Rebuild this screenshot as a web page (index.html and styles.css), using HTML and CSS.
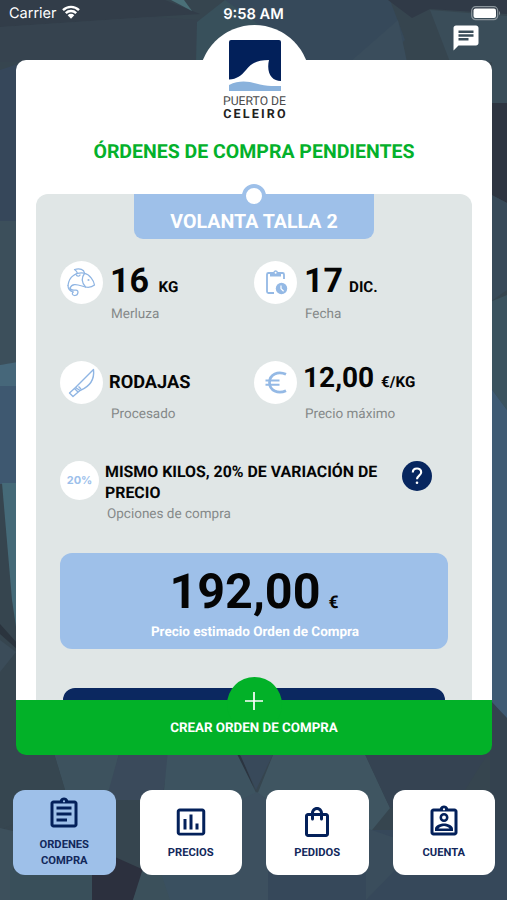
FILE: index.html
```html
<!DOCTYPE html>
<html lang="es">
<head>
<meta charset="utf-8">
<title>Puerto de Celeiro</title>
<link rel="stylesheet" href="styles.css">
</head>
<body>
<svg class="backdrop" viewBox="0 0 507 900" preserveAspectRatio="none" aria-hidden="true">
  <rect width="507" height="900" fill="#36454f"/>
  <path fill="#323d49" d="M0 0H165L200 14 150 17 0 27z"/>
  <path fill="#36434f" d="M0 27L150 17 200 20 205 62H0z"/>
  <path fill="#4a7078" d="M171 0L192 11 184 0z"/>
  <path fill="#38505b" d="M197 22L225 0H330L310 62H196z"/>
  <path fill="#36495a" d="M225 0H390L405 40 380 62H310z"/>
  <path fill="#3a4d5c" d="M350 62L398 20 407 62z"/>
  <path fill="#303a47" d="M388 0H507V14L430 9 412 18z"/>
  <path fill="#3a4d59" d="M430 10L507 16V103H492V62H450z"/>
  <path fill="#36475a" d="M0 70L18 64V221H0z"/>
  <path fill="#3c4f5b" d="M0 221H18V363L0 365z"/>
  <path fill="#46677a" d="M0 365L18 362V387H0z"/>
  <path fill="#3e5870" d="M0 386H18V484H0z"/>
  <path fill="#456a78" d="M2 483L18 483V640L12 600z"/>
  <path fill="#2b343e" d="M0 624L18 644V650L0 634z"/>
  <path fill="#3b4c59" d="M0 640L16 652 0 672z"/>
  <path fill="#2e3541" d="M490 103H507V203L490 194z"/>
  <path fill="#384a59" d="M490 194L507 203V290L490 302z"/>
  <path fill="#3b535f" d="M490 302L507 295V410L490 387z"/>
  <path fill="#3f5b74" d="M490 387L507 410V720L490 700z"/>
  <path fill="#34424f" d="M490 700L507 718V900H490z"/>
  <path fill="#3d525e" d="M53 750H120L108 800H68z"/>
  <path fill="#3a4a5b" d="M120 750H170L162 800H106z"/>
  <path fill="#3d5360" d="M168 750H236L257 795 240 830H160z"/>
  <path fill="#2b3440" d="M235 750L242 757 254 788z"/>
  <path fill="#38495a" d="M238 750H275L256 790z"/>
  <path fill="#3f5561" d="M275 750H363L390 808 368 835 257 795z"/>
  <path fill="#354352" d="M363 750H490L465 790 390 808z"/>
  <path fill="#364650" d="M0 750H53L68 800 0 830z"/>
  <path fill="#3d505c" d="M0 828L13 831V900H0z"/>
  <path fill="#394f5a" d="M10 870H92V900H10z"/>
  <path fill="#2c303e" d="M92 900V870L115 857 144 870 133 900z"/>
  <path fill="#3b505b" d="M133 900L144 865 166 868 175 900z"/>
  <path fill="#3a5060" d="M160 870H267V900H170z"/>
  <path fill="#36485a" d="M267 830H507V900H267z"/>
  <path fill="#3d505f" d="M240 800L257 792 268 800V900H240z"/>
  <path fill="#3a4d5c" d="M366 828L395 838V870L366 900z"/>
</svg>

<div class="screen">
  <header class="status">
    <div class="carrier"><span>Carrier</span>
      <svg class="wifi" viewBox="0 0 18 14"><g fill="none" stroke="#fff" stroke-width="2.400"><path d="M1 5.200a11.400 11.400 0 0 1 16 0"/><path d="M3.800 8.200a7.400 7.400 0 0 1 10.400 0"/></g><path d="M5.700 10.200a4.700 4.700 0 0 1 6.600 0L9 13.700z" fill="#fff"/></svg>
    </div>
    <time>9:58 AM</time>
    <svg class="battery" viewBox="0 0 31 15"><rect x=".7" y=".7" width="26" height="13" rx="4" fill="none" stroke="#8b959c" stroke-width="1.2"/><rect x="2.5" y="2.5" width="22.5" height="9.5" rx="2" fill="#fff"/><path d="M28 5q2.2 2.2 0 4.5z" fill="#8b959c"/></svg>
  </header>
  <svg class="chat" viewBox="0 0 24 24" fill="#fff"><path d="M20 2H4c-1.1 0-1.99.9-1.99 2L2 22l4-4h14c1.1 0 2-.9 2-2V4c0-1.1-.9-2-2-2zM6 9h12v2H6V9zm8 5H6v-2h8v2zm4-6H6V6h12v2z"/></svg>

  <main class="card">
    <div class="brand">
      <svg class="mark" viewBox="0 0 52 51"><path fill="#02205a" d="M2 0H50Q52 0 52 2V41C43 41 37 33 40 20C27 20 22 24 17 30C12 36 8 39 0 39.500V2Q0 0 2 0z"/><path fill="#8ab2dc" d="M0 45C12 39 22 42 31 44.500C39 46.500 46 46 52 46V51H0z"/></svg>
      <span class="brand-top">PUERTO DE</span>
      <span class="brand-name">CELEIRO</span>
    </div>
    <h1>ÓRDENES DE COMPRA PENDIENTES</h1>

    <section class="order">
      <div class="tab"><i class="ring"></i><h2>VOLANTA TALLA 2</h2></div>
      <div class="facts">
        <div class="fact">
          <div class="disc"><svg viewBox="0 0 43 43" fill="none" stroke="#8fb5e3" stroke-width="1.25" stroke-linejoin="round" stroke-linecap="round"><path d="M8 24.500C9 15 17 11 24 12.200C30 13.500 34 20 34.500 24C31 27 26 26.500 22 25C16 23 12 22.500 10 27"/><path d="M15 13.500C18 13 18 11 14.500 8.500C20 7 24 8.500 24.500 12"/><path d="M24.500 12.500C21 17 22 22 25.500 26"/><path d="M8 24.500C8 29 11 30.500 13.500 31C11.500 32 12 34.500 15 34.500C18.500 34 19 29 16 29C13 29.500 10.500 29 10 27"/><path d="M16.500 14.500Q18.500 16 20 14"/><circle cx="28.500" cy="19" r=".4"/></svg></div>
          <p class="value big">16 <small class="kg">KG</small></p>
          <p class="label">Merluza</p>
        </div>
        <div class="fact">
          <div class="disc"><svg viewBox="0 0 43 43"><path fill="none" stroke="#94b9e5" stroke-width="1.8" d="M20 32H14.500Q13 32 13 30.500V13.500Q13 12 14.500 12H28.500Q30 12 30 13.500V18"/><path fill="#94b9e5" d="M16 11h3.300a2.500 2.500 0 0 1 4.700 0H27v4.500H16z"/><circle cx="21.600" cy="11.700" r="1" fill="#fff"/><circle cx="27.500" cy="27.500" r="5.700" fill="#94b9e5"/><path d="M27 24.500V27.700L29.600 30.200" fill="none" stroke="#fff" stroke-width="1.200"/></svg></div>
          <p class="value big">17<small class="dic">DIC.</small></p>
          <p class="label">Fecha</p>
        </div>
        <div class="fact">
          <div class="disc"><svg viewBox="0 0 43 43" fill="none" stroke="#8fb5e3" stroke-width="1.400" stroke-linejoin="round"><path d="M15.500 26.500L33.500 8.500C34.500 17 31 25 20 29.500L15.500 26.500L9.500 32L13 35.500L20 29.500"/><path d="M14.500 27.500L18 31M18.500 25.500L21 28"/></svg></div>
          <p class="value word">RODAJAS</p>
          <p class="label">Procesado</p>
        </div>
        <div class="fact">
          <div class="disc"><svg viewBox="0 0 43 43" fill="none" stroke="#94b9e5" stroke-width="2.700"><path d="M32 13.300C24 9.500 15.500 13.500 15.500 21.500S24 33.500 32 29.700"/><path d="M11.500 19.500H25.500M11.500 23.800H25.500" stroke-width="1.900"/></svg></div>
          <p class="value price">12,00 <small>€/KG</small></p>
          <p class="label">Precio máximo</p>
        </div>
      </div>
      <div class="option">
        <div class="disc percent">20%</div>
        <div class="option-text"><p>MISMO KILOS, 20% DE VARIACIÓN DE PRECIO</p><p class="label">Opciones de compra</p></div>
        <div class="help"><svg viewBox="0 0 30 30"><path d="M10.800 11.500C10.800 6.200 19.200 6.200 19.200 11.300C19.200 14.500 15 14.700 15 18.200" fill="none" stroke="#fff" stroke-width="2.100"/><circle cx="15" cy="21.800" r="1.300" fill="#fff"/></svg></div>
      </div>
      <div class="total"><p class="amount"><span>192,00</span><small>€</small></p><p class="caption">Precio estimado Orden de Compra</p></div>
      <div class="next"></div>
    </section>
  </main>

  <div class="create">
    <span class="plus"></span>
    <svg class="cross" viewBox="0 0 18 18"><path d="M9 0V18M0 9H18" stroke="#fff" stroke-width="1.700"/></svg>
    <span class="create-text">CREAR ORDEN DE COMPRA</span>
  </div>

  <nav>
    <a class="active"><svg viewBox="0 0 24 24"><path d="M7 15h7v2H7zm0-4h10v2H7zm0-4h10v2H7zm12-4h-4.180C14.400 1.840 13.300 1 12 1s-2.400.840-2.820 2H5c-1.100 0-2 .9-2 2v14c0 1.100.9 2 2 2h14c1.100 0 2-.9 2-2V5c0-1.100-.9-2-2-2zm-7-.250a.75.75 0 0 1 0 1.500.75.75 0 0 1 0-1.500zM19 19H5V5h14v14z"/></svg><span>ORDENES<br>COMPRA</span></a>
    <a><svg viewBox="0 0 24 24"><path d="M7 10h2v7H7zm4-3h2v10h-2zm4 6h2v4h-2zm4.500 6.100h-15V5h15v14.100zm0-16.100h-15c-1.100 0-2 .9-2 2v14c0 1.100.9 2 2 2h15c1.100 0 2-.9 2-2V5c0-1.100-.9-2-2-2z"/></svg><span>PRECIOS</span></a>
    <a><svg viewBox="0 0 24 24"><path d="M18 6h-2c0-2.210-1.790-4-4-4S8 3.790 8 6H6c-1.100 0-2 .9-2 2v12c0 1.100.9 2 2 2h12c1.100 0 2-.9 2-2V8c0-1.100-.9-2-2-2zm-6-2c1.100 0 2 .9 2 2h-4c0-1.100.9-2 2-2zm6 16H6V8h2v2c0 .550.450 1 1 1s1-.450 1-1V8h4v2c0 .550.450 1 1 1s1-.450 1-1V8h2v12z"/></svg><span>PEDIDOS</span></a>
    <a><svg viewBox="0 0 24 24"><path fill-rule="evenodd" d="M19 3h-4.180C14.400 1.840 13.300 1 12 1s-2.400.840-2.820 2H5c-1.100 0-2 .9-2 2v14c0 1.100.9 2 2 2h14c1.100 0 2-.9 2-2V5c0-1.100-.9-2-2-2zM12 2.750a.75.75 0 0 1 0 1.500.75.75 0 0 1 0-1.500zM19 19H5V5h14zM12 6a3 3 0 1 0 0 6 3 3 0 0 0 0-6zm0 1.700a1.300 1.300 0 1 1 0 2.600 1.300 1.300 0 0 1 0-2.600zM6 16.500V18h12v-1.500c0-2.500-3.970-3.580-6-3.580s-6 1.080-6 3.580zm2.300-.1c.7-.970 2.600-1.700 3.700-1.700s3.010.730 3.700 1.700z"/></svg><span>CUENTA</span></a>
  </nav>
</div>
</body>
</html>
```
FILE: styles.css
```css
* { box-sizing: border-box; margin: 0; padding: 0; }
body { width: 507px; height: 900px; overflow: hidden; font-family: Roboto, sans-serif; color: #050505; text-rendering: geometricPrecision; }
svg { display: block; }
.backdrop { position: absolute; left: 0; top: 0; width: 507px; height: 900px; }
.screen { position: relative; height: 900px; display: flex; flex-direction: column; }

.status { display: grid; grid-template-columns: 1fr 64px 1fr; height: 60px; padding: 6px 5px 0 5px; color: #fff; font: 500 14.700px/16px Inter, sans-serif; }
.status time { font-weight: 600; white-space: nowrap; text-align: center; }
.carrier { display: flex; gap: 5px; padding-left: 4px; font-weight: 400; font-size: 14.500px; }
.wifi { width: 18px; height: 14px; margin-top: -1px; }
.battery { width: 31px; height: 15px; justify-self: end; }
.chat { position: absolute; left: 450.500px; top: 22.500px; width: 30px; height: 30px; }

.card { display: flow-root; position: relative; margin: 0 15px 0 16px; height: 640px; border-radius: 10px 10px 0 0; background: #fff; }
.card::before { content: ""; position: absolute; left: 182.500px; top: -35px; width: 111px; height: 111px; border-radius: 50%; background: #fff; }
.brand { position: relative; display: flex; flex-direction: column; align-items: center; height: 82px; margin-top: -20px; }
.mark { width: 52px; height: 51px; flex: none; margin-left: 2px; }
.brand-top { margin: 3px 0 0 1px; font-size: 12.200px; line-height: 14px; color: #4b4b4b; }
.brand-name { font-size: 12.500px; line-height: 13px; font-weight: 700; letter-spacing: 2.200px; margin-left: 3px; color: #222; }
h1 { position: relative; margin-top: 18px; text-align: center; font-size: 19.500px; line-height: 24px; font-weight: 700; color: #04b12b; white-space: nowrap; }

.order { margin: 30px 20px 0; height: 506px; border-radius: 12px 12px 0 0; background: #e0e6e6; padding: 0 24px; }
.tab { position: relative; width: 240px; height: 45px; margin: 0 auto; background: #9ec0e9; border-radius: 0 0 9px 9px; padding-top: 16px; }
.ring { position: absolute; left: 108px; top: -10px; width: 24px; height: 24px; border-radius: 50%; border: 4px solid #9ec0e9; background: #fff; }
h2 { color: #fff; font-size: 19.600px; line-height: 24px; font-weight: 700; text-align: center; }
.facts { display: grid; grid-template-columns: 194px 194px; grid-template-rows: 100px 100px; padding-top: 22px; }
.fact { display: grid; grid-template-columns: 43px 1fr; grid-template-rows: 43px 20px; column-gap: 6px; }
.disc { width: 43px; height: 43px; border-radius: 50%; background: #fff; }
.value { font-weight: 700; white-space: nowrap; }
.big { font-size: 34px; line-height: 40px; padding-left: 1px; }
.value small { font-size: 15.200px; line-height: 1; }
.kg { margin-left: 1px; }
.value .dic { margin-left: 6px; }
.label { color: #858989; font-size: 13.500px; line-height: 20px; white-space: nowrap; }
.fact .label { grid-column: 2; padding-left: 2px; }
.word { font-size: 18.200px; line-height: 44px; }
.price { font-size: 28px; line-height: 34px; }
.option { display: flex; height: 92px; }
.percent { flex: none; width: 39px; height: 39px; color: #9cc0eb; font: 700 11px/39px Inter, sans-serif; text-align: center; }
.option-text { width: 290px; margin-left: 6px; }
.option-text p { font-size: 15.900px; line-height: 21px; font-weight: 700; }
.option-text .label { font-size: 13.500px; line-height: 23px; font-weight: 400; padding-left: 2px; }
.help { width: 30px; height: 30px; margin-left: 7px; border-radius: 50%; background: #07265f; }
.total { height: 96px; border-radius: 12px; background: #9ec0e9; text-align: center; padding-top: 11px; }
.amount { display: flex; justify-content: center; align-items: baseline; gap: 8px; font-size: 48.500px; line-height: 56px; font-weight: 700; }
.amount small { font-size: 17.500px; line-height: 1; }
.caption { color: #fff; font-size: 13.500px; line-height: 24px; font-weight: 700; padding-left: 2px; }
.next { height: 12px; margin: 39px 3px 0; border-radius: 12px 12px 0 0; background: #0b2860; }

.create { position: relative; height: 54.500px; margin: 0 15px 0 16px; border-radius: 0 0 10px 10px; background: #02b128; text-align: center; padding-top: 17px; }
.plus { position: absolute; left: 210.500px; top: -23px; width: 55px; height: 55px; border-radius: 50%; background: #02b128; }
.cross { position: absolute; left: 229px; top: -8px; width: 18px; height: 18px; }
.create-text { position: relative; color: #fff; font-size: 13.350px; line-height: 20px; font-weight: 700; }

nav { display: grid; grid-template-columns: repeat(4, 102.500px); gap: 24px; margin: 35px 0 0 13px; height: 85.500px; }
nav a { display: flex; flex-direction: column; align-items: center; border-radius: 12px; background: #fff; padding-top: 14px; color: #12285b; font-size: 11.200px; line-height: 16px; font-weight: 700; text-align: center; }
nav svg { width: 36px; height: 36px; fill: #03205a; margin-bottom: 5px; }
nav .active { background: #9ec0e9; padding-top: 6px; }
```
